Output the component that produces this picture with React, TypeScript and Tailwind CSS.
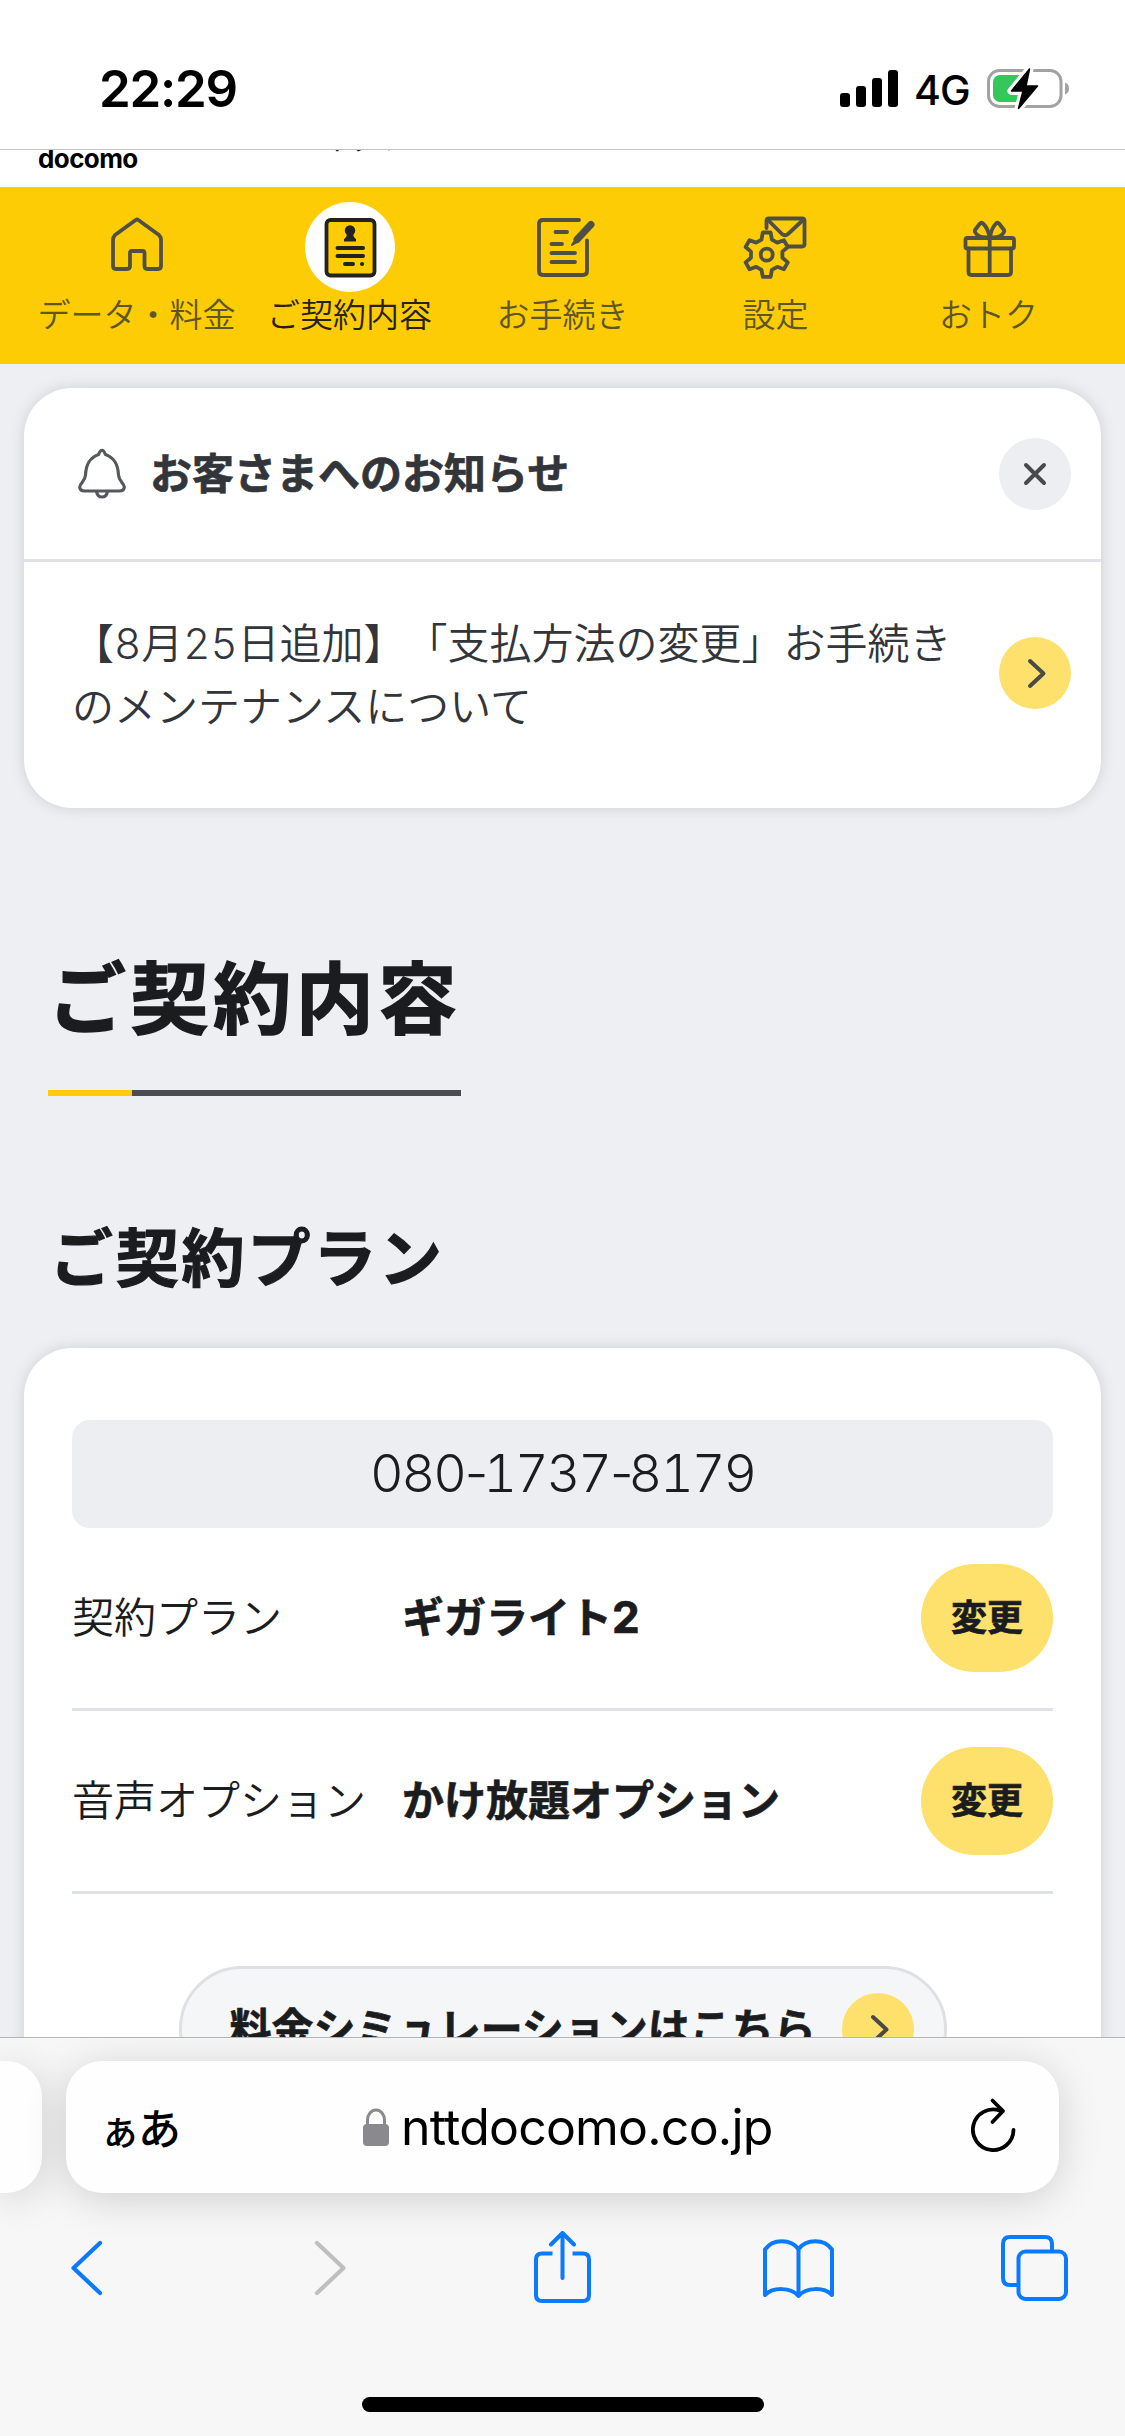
import type { ReactNode } from 'react'

const JP = "font-['Noto_Sans_CJK_JP',sans-serif]"
const LATIN = "font-['Inter','Liberation_Sans',sans-serif]"

// Outline of a six-toothed gear around (cx, cy)
const gearPath = (cx: number, cy: number) => {
  const points: string[] = []
  for (let tooth = 0; tooth < 6; tooth++) {
    const steps = [
      [16, -19],
      [22.5, -10],
      [22.5, 10],
      [16, 19],
    ]
    steps.forEach(([r, offset]) => {
      const angle = ((tooth * 60 - 90 + offset) * Math.PI) / 180
      const x = cx + r * Math.cos(angle)
      const y = cy + r * Math.sin(angle)
      points.push(`${x.toFixed(1)} ${y.toFixed(1)}`)
    })
  }
  return `M${points.join('L')}Z`
}

const NavIcon = ({ children }: { children: ReactNode }) => (
  <svg
    width="90"
    height="90"
    viewBox="0 0 90 90"
    fill="none"
    stroke="#4f5043"
    strokeWidth="3.8"
    strokeLinecap="round"
    strokeLinejoin="round"
  >
    {children}
  </svg>
)

const HomeIcon = () => (
  <NavIcon>
    <path d="M21 38q0-3 2-5L43 18.500q2-2 4 0L67 33q2 2 2 5V64q0 3-3 3H55.500q-3 0-3-3V51q0-2-2-2H40q-2 0-2 2V64q0 3-3 3H24q-3 0-3-3Z" />
  </NavIcon>
)

const ContractIcon = () => (
  <NavIcon>
    <g stroke="#222220">
      <rect x="21.500" y="18" width="48" height="55.500" rx="4" fill="#fdcc05" />
      <path d="M32.500 46H58M32.500 54H58M40 62h8M57 62h.1" strokeWidth="4" />
    </g>
    <g fill="#222220" stroke="none">
      <circle cx="45" cy="28.500" r="5.200" />
      <path d="M42 31h6q0 4 3 6v2.500H39V37q3-2 3-6Z" />
    </g>
  </NavIcon>
)

const ProcedureIcon = () => (
  <NavIcon>
    <path d="M61 18H25q-4 0-4 4V69q0 4 4 4H65q4 0 4-4V38.500" />
    <path d="M37.500 30H49M33.500 42H44M33.500 51H57M33.500 60H57" strokeWidth="3.800" />
    <path d="M73 22.500L59 37.500" strokeWidth="7" />
    <path d="M58 37L54 43L61 39Z" fill="#4f5043" strokeWidth="2" />
  </NavIcon>
)

const SettingsIcon = () => (
  <NavIcon>
    <path d="M35.500 26V19q0-2.500 2.500-2.500H71q2.500 0 2.500 2.500V42q0 2.500-2.500 2.500H57" />
    <path d="M37 18L51 32q3 2.500 6 0L72 18" />
    <path d={gearPath(35.7, 52.7)} />
    <circle cx="35.700" cy="52.700" r="6" />
  </NavIcon>
)

const GiftIcon = () => (
  <NavIcon>
    <rect x="21.500" y="36" width="48.500" height="10.500" rx="2" />
    <path d="M24.500 46.500V70q0 3 3 3H64q3 0 3-3V46.500M45.700 36V73" />
    <path d="M45.500 35C38 36 33 34 31 30q-.5-1 0-2L36 21.500q2-1.500 3 0Q44 26 45.500 35ZM46 35C53 36 58 34 60 30q.5-1 0-2L55 21.500q-2-1.500-3 0Q47.500 26 46 35Z" />
  </NavIcon>
)

const BellIcon = () => (
  <svg width="48" height="52" viewBox="0 0 48 52" fill="none" stroke="#55585c" strokeWidth="3.200">
    <path d="M20.500 6.500Q24-2 27.500 6.500C37 10 40 17 40.500 27C41 34 46 35 46.300 39Q46.300 43 41 43H7Q1.700 43 1.700 39C2 35 7 34 7.500 27C8 17 11 10 20.500 6.500Z" />
    <path d="M18.500 43.500q1 5.500 5.500 5.500t5.500-5.500" />
  </svg>
)

const CloseButton = () => (
  <button className="size-[72px] rounded-full bg-[#edeef2]">
    <svg width="72" height="72" viewBox="0 0 72 72" fill="none" stroke="#46494e" strokeWidth="4" strokeLinecap="round">
      <path d="M27 27L45 45M45 27L27 45" />
    </svg>
  </button>
)

const ArrowCircle = () => (
  <span className="block size-[72px] shrink-0 rounded-full bg-[#fee06c]">
    <svg
      width="72"
      height="72"
      viewBox="0 0 72 72"
      fill="none"
      stroke="#4a4a48"
      strokeWidth="4"
      strokeLinecap="round"
      strokeLinejoin="round"
    >
      <path d="M31 24L44.500 36.500L31 49" />
    </svg>
  </span>
)

const StatusBar = () => (
  <div className="flex h-[150px] shrink-0 border-b border-[#c3c4c6] bg-white">
    <div
      className={`ml-[99px] mt-[58px] w-[741px] text-[51px] leading-[62px] font-semibold tracking-[-1.3px] text-black ${LATIN}`}
    >
      22:29
    </div>
    <svg className="mt-[70px]" width="58" height="37" viewBox="0 0 58 37">
      <rect x="0" y="23" width="10" height="14" rx="3" />
      <rect x="16" y="16" width="10" height="21" rx="3" />
      <rect x="32" y="8" width="10" height="29" rx="3" />
      <rect x="48" y="0" width="10" height="37" rx="3" />
    </svg>
    <div
      className={`ml-4 mt-[65px] w-[73px] text-[41px] leading-[50px] font-medium tracking-[-1px] text-black ${LATIN}`}
    >
      4G
    </div>
    <svg className="mt-[69px] overflow-visible" width="82" height="40" viewBox="0 0 82 40">
      <rect x="1.500" y="1.500" width="72.500" height="36" rx="11" fill="none" stroke="#a2a2a4" strokeWidth="3" />
      <rect x="6" y="6" width="34" height="27" rx="7" fill="#35c759" />
      <path d="M78 13.500q4 1.500 4 6t-4 6Z" fill="#a2a2a4" />
      <path
        d="M42.500 0L24.500 22H36L31.500 39.500L50.500 17H39Z"
        stroke="#fff"
        strokeWidth="8"
        strokeLinejoin="round"
      />
      <path d="M40 6H70V33H36Z" fill="#fff" />
      <path d="M42.500 0L24.500 22H36L31.500 39.500L50.500 17H39Z" stroke="#000" strokeWidth="1.500" strokeLinejoin="round" />
    </svg>
  </div>
)

const NAV_ITEMS = [
  { label: 'データ・料金', icon: <HomeIcon /> },
  { label: 'ご契約内容', icon: <ContractIcon />, active: true },
  { label: 'お手続き', icon: <ProcedureIcon /> },
  { label: '設定', icon: <SettingsIcon /> },
  { label: 'おトク', icon: <GiftIcon /> },
]

const GlobalNav = () => (
  <nav className="grid h-[177px] shrink-0 grid-cols-5 bg-[#fdcc05] px-[30px] pt-[15px]">
    {NAV_ITEMS.map((item) => (
      <a key={item.label} className="flex flex-col items-center">
        <span className={item.active ? 'rounded-full bg-white' : ''}>{item.icon}</span>
        <span
          className={
            item.active
              ? 'text-[33px] leading-[43px] font-[350] whitespace-nowrap text-[#26220f]'
              : 'text-[33px] leading-[43px] font-[350] whitespace-nowrap text-[#5d5728]'
          }
        >
          {item.label}
        </span>
      </a>
    ))}
  </nav>
)

const Notice = () => (
  <section className="mx-6 mt-6 h-[420px] shrink-0 rounded-[48px] bg-white shadow-[0_0_15px_rgba(0,0,0,0.13)]">
    <div className="flex h-[174px] items-center border-b-[3px] border-[#e1e2e7] pr-[30px] pl-[54px]">
      <BellIcon />
      <h2 className="ml-6 flex-1 pb-1.5 text-[42px] leading-[60px] font-bold text-[#323539] [-webkit-text-stroke:0.7px]">
        お客さまへのお知らせ
      </h2>
      <CloseButton />
    </div>
    <a className="flex h-[246px] pt-[47px] pr-[30px] pl-12">
      <p className="flex-1 text-[42px] leading-[63px] font-[350] whitespace-nowrap text-[#323539] [text-spacing-trim:space-all]">
        【<span className={`leading-none font-light tabular-nums ${LATIN}`}>8</span>月
        <span className={`leading-none font-light tabular-nums ${LATIN}`}>25</span>日追加】「支払方法の変更」お手続き
        <br />
        のメンテナンスについて
      </p>
      <span className="mt-[28px]">
        <ArrowCircle />
      </span>
    </a>
  </section>
)

const PhoneNumber = ({ value }: { value: string }) => (
  <div
    className={`h-[108px] rounded-[18px] bg-[#edeef2] text-center text-[52px] leading-[108px] font-light tracking-[-2px] text-[#1b1c1e] ${LATIN}`}
  >
    {value.split('-').map((part, i) => (
      <span key={i}>
        {i > 0 && <span className="tracking-[-5px]">-</span>}
        <span className="tabular-nums">{part}</span>
      </span>
    ))}
  </div>
)

const PlanRow = ({ label, children }: { label: string; children: ReactNode }) => (
  <div className="flex h-[183px] items-center border-b-[3px] border-[#dee1e6] text-[42px] leading-[60px] text-[#1b1c1e]">
    <dt className="w-[330px] pb-1.5 font-[350]">{label}</dt>
    <dd className="flex-1 pb-1.5 font-bold [-webkit-text-stroke:0.7px]">{children}</dd>
    <button className="h-[108px] w-[132px] rounded-[54px] bg-[#fee06c] pb-1.5 text-[36px] font-bold [-webkit-text-stroke:0.7px]">
      変更
    </button>
  </div>
)

const PlanCard = () => (
  <section className="mx-6 mt-[50px] h-[900px] shrink-0 rounded-[48px] bg-white px-12 pt-[72px] shadow-[0_0_15px_rgba(0,0,0,0.13)]">
    <PhoneNumber value="080-1737-8179" />
    <dl>
      <PlanRow label="契約プラン">
        ギガライト<span className={`text-[44px] leading-none ${LATIN}`}>2</span>
      </PlanRow>
      <PlanRow label="音声オプション">かけ放題オプション</PlanRow>
    </dl>
    <a className="mx-auto mt-[72px] flex h-[126px] w-[768px] items-center rounded-[63px] border-[3px] border-[#dee0e4] bg-[#f5f6f7] pr-[30px] pl-[48px]">
      <span className="flex-1 pb-1.5 text-[42px] leading-[60px] font-bold whitespace-nowrap text-[#1b1c1e] [-webkit-text-stroke:0.7px]">
        料金シミュレーションはこちら
      </span>
      <ArrowCircle />
    </a>
  </section>
)

const AddressBar = () => (
  <div className="flex gap-6 pt-[23px]">
    <div className="h-[132px] w-[42px] rounded-r-[36px] bg-[#fefefe] shadow-[0_6px_42px_rgba(0,0,0,0.16)]" />
    <div className="flex h-[132px] w-[993px] items-center rounded-[36px] bg-[#fefefe] pr-[41px] pl-[34px] text-black shadow-[0_6px_42px_rgba(0,0,0,0.16)]">
      <div className="flex w-[263px] items-baseline font-medium tracking-[-2px]">
        <span className="text-[40px] leading-[60px]">ぁ</span>
        <span className="text-[43px] leading-[60px]">あ</span>
      </div>
      <svg width="26" height="38" viewBox="0 0 26 38">
        <path d="M4.500 18V12a8.500 10 0 0 1 17 0V18" fill="none" stroke="#8a8a8e" strokeWidth="3" />
        <rect y="16" width="26" height="22" rx="4" fill="#8a8a8e" />
      </svg>
      <div className={`ml-3 flex-1 text-[50px] leading-[60px] tracking-[-0.8px] ${LATIN}`}>
        nttdocomo.co.jp
      </div>
      <svg
        width="48"
        height="60"
        viewBox="0 0 48 60"
        fill="none"
        stroke="#000"
        strokeWidth="3.800"
        strokeLinecap="round"
        strokeLinejoin="round"
      >
        <path d="M43.500 33A20.300 20.300 0 1 1 30 13.600" />
        <path d="M22.500 3.500L33 14L22.500 25" />
      </svg>
    </div>
  </div>
)

const Toolbar = () => (
  <div className="flex h-[90px] w-full items-center pl-[70px] text-[#0a7aff] [stroke-linecap:round] [stroke-linejoin:round] [&>svg]:shrink-0">
    <svg width="33" height="56" viewBox="0 0 33 56" fill="none" stroke="currentColor" strokeWidth="4.200">
      <path d="M30 3L3.500 28L30 53" />
    </svg>
    <svg className="ml-[211px]" width="33" height="56" viewBox="0 0 33 56" fill="none" stroke="#bfbfc0" strokeWidth="4.200">
      <path d="M3 3L29.500 28L3 53" />
    </svg>
    <svg className="mb-0.5 ml-[187px]" width="57" height="72" viewBox="0 0 57 72" fill="none" stroke="currentColor" strokeWidth="4">
      <path d="M18.500 22.500H8q-6 0-6 6V64q0 6 6 6H49q6 0 6-6V28.500q0-6-6-6H38.500" strokeLinecap="butt" />
      <path d="M28.500 47V3M17 13.500L28.500 2L40 13.500" />
    </svg>
    <svg className="ml-[172px]" width="71" height="59" viewBox="0 0 71 59" fill="none" stroke="currentColor" strokeWidth="4">
      <path d="M2 10.500C10-1 28 0 35.500 10C43 0 61-1 69 10.500V56C61 48 43 48 35.500 57C28 48 10 48 2 56Z" />
      <path d="M35.500 10V56" />
    </svg>
    <svg className="ml-[167px]" width="67" height="66" viewBox="0 0 67 66" fill="none" stroke="currentColor" strokeWidth="4">
      <path d="M51 15.500V9q0-7-7-7H9Q2 2 2 9V43q0 7 7 7h7" strokeLinecap="butt" />
      <rect x="17.500" y="16.500" width="47.500" height="47.500" rx="7" />
    </svg>
  </div>
)

const App = () => {
  return (
    <div className={`flex h-[2436px] w-[1125px] flex-col overflow-hidden bg-[#edeff3] ${JP}`}>
      <StatusBar />

      <header className="flex h-[37px] shrink-0 overflow-hidden bg-white pl-[38px]">
        <span
          className={`-mt-[7px] w-[242px] text-[26px] leading-[32px] font-bold tracking-[-0.6px] text-black ${LATIN}`}
        >
          docomo
        </span>
        <span className="-mt-[35px] text-[33px] leading-[40px] font-normal text-[#222]">ショップ</span>
      </header>

      <GlobalNav />

      <main className="flex min-h-0 flex-1 flex-col overflow-hidden">
        <Notice />
        <div className="ml-12 shrink-0 pt-[129px]">
          <h1 className="inline-block text-[78px] leading-[114px] font-bold tracking-[4.6px] text-[#1b1c1e] [-webkit-text-stroke:1.5px]">
            ご契約内容
            <span className="mt-[39px] flex h-[6px] bg-[#4b4d53]">
              <span className="w-[84px] bg-[#fdcc05]" />
            </span>
          </h1>
          <h2 className="mt-[109px] ml-0.5 text-[63px] leading-[88px] font-bold tracking-[2.8px] text-[#1b1c1e] [-webkit-text-stroke:1.2px]">
            ご契約プラン
          </h2>
        </div>
        <PlanCard />
      </main>

      <footer className="h-[399px] shrink-0 overflow-hidden border-t border-[#b3b4b6] bg-[#f7f7f7]">
        <AddressBar />
        <div className="pt-[30px]">
          <Toolbar />
        </div>
        <div className="mx-auto mt-[84px] h-[15px] w-[402px] rounded-full bg-black" />
      </footer>
    </div>
  )
}

export default App
